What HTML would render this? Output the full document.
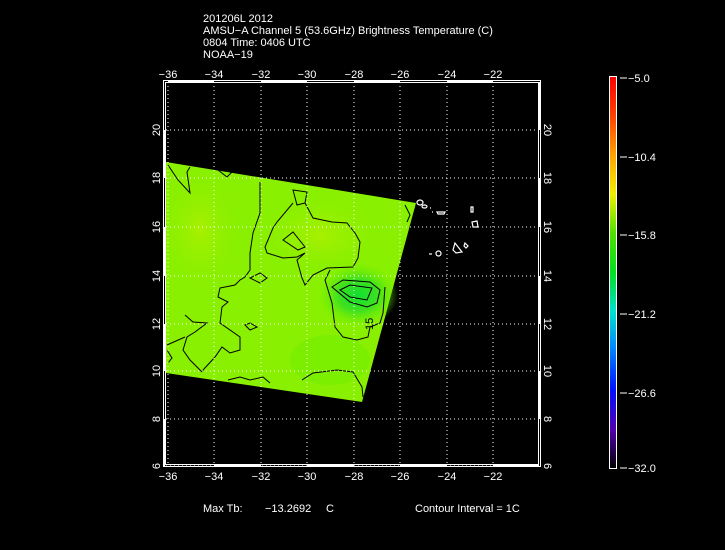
<!DOCTYPE html>
<html><head><meta charset="utf-8"><style>
html,body{margin:0;padding:0;background:#000;width:725px;height:550px;overflow:hidden}
svg text{font-family:"Liberation Sans",sans-serif;fill:#fff}
</style></head><body>
<svg width="725" height="550" viewBox="0 0 725 550" xmlns="http://www.w3.org/2000/svg">
<defs>
<linearGradient id="cb" x1="0" y1="0" x2="0" y2="1">
<stop offset="0" stop-color="#ff0000"/>
<stop offset="0.1" stop-color="#ff4000"/>
<stop offset="0.2" stop-color="#ffa000"/>
<stop offset="0.3" stop-color="#f0f000"/>
<stop offset="0.4" stop-color="#50e000"/>
<stop offset="0.5" stop-color="#00e020"/>
<stop offset="0.6" stop-color="#00e0d0"/>
<stop offset="0.7" stop-color="#0080ff"/>
<stop offset="0.8" stop-color="#0010ff"/>
<stop offset="0.9" stop-color="#5000b0"/>
<stop offset="1" stop-color="#000000"/>
</linearGradient>
<radialGradient id="blob" cx="0.5" cy="0.5" r="0.5">
<stop offset="0" stop-color="#10e030"/>
<stop offset="0.5" stop-color="#40e020"/>
<stop offset="1" stop-color="#70f000" stop-opacity="0"/>
</radialGradient>
<radialGradient id="yl" cx="0.5" cy="0.5" r="0.5">
<stop offset="0" stop-color="#a8f000"/>
<stop offset="1" stop-color="#90f000" stop-opacity="0"/>
</radialGradient>
</defs>
<g font-size="11">
<text x="203" y="22">201206L 2012</text>
<text x="203" y="34">AMSU−A Channel 5 (53.6GHz) Brightness Temperature (C)</text>
<text x="203" y="46">0804 Time: 0406 UTC</text>
<text x="203" y="58">NOAA−19</text>
</g>
<polygon points="166,162 416,203 362,402 166,373" fill="#88f000"/>
<ellipse cx="320" cy="235" rx="60" ry="40" fill="url(#yl)"/>
<ellipse cx="200" cy="230" rx="40" ry="60" fill="url(#yl)"/>
<ellipse cx="358" cy="295" rx="40" ry="32" fill="url(#blob)"/>
<ellipse cx="330" cy="360" rx="40" ry="25" fill="#70ee00" opacity="0.5"/>
<g fill="none" stroke="#000" stroke-width="1">
<path d="M168,165 L178,180 L190,193 L187,172 L190,167"/>
<path d="M218,170 L227,177 L232,172"/>
<path d="M260,182 L260,213 L253,233 L250,253 L250,270 L245,277 L240,280 L235,285 L220,288 L218,297 L228,302 L222,307 L220,323 L240,337 L240,350 L230,353 L222,347 L215,357 L203,370 L202,372"/>
<path d="M185,315 L193,322 L207,323 L195,332 L187,337 L183,350 L190,360 L202,372"/>
<path d="M167,345 L185,337"/>
<path d="M167,350 L172,358 L168,363"/>
<path d="M293,190 L307,192 L305,203 L297,205 Z"/>
<path d="M305,203 L313,218 L332,222 L347,223 L355,233 L360,242 L358,258 L353,267 L327,268 L313,275 L305,285 L302,278 L297,260 L305,253 L297,257 L283,258 L267,253 L265,247 L273,228 L277,222 L293,203"/>
<path d="M283,240 L293,232 L305,247 L298,250 Z"/>
<path d="M250,278 L260,273 L267,278 L260,283 Z"/>
<path d="M245,325 L250,323 L257,327 L250,330 Z"/>
<path d="M385,287 L383,313 L380,323 L370,327 L368,337 L357,340 L343,337 L335,327 L332,303 L325,280 L330,270"/>
<path d="M332,287 L343,280 L370,282 L380,290 L377,303 L367,307 L350,302 Z"/>
<path d="M340,290 L350,285 L372,288 L367,300 L350,297 Z"/>
<path d="M228,380 L240,377 L250,380 L263,377 L270,383"/>
<path d="M302,380 L313,373 L337,370 L353,372 L362,387 L363,397"/>
<path d="M405,205 L410,215 L407,222"/>
</g>
<text font-size="11" style="fill:#000" transform="translate(373,330) rotate(-90)">15</text>
<g fill="none" stroke="#fff" stroke-width="1.2">
<ellipse cx="420" cy="202.5" rx="3" ry="2.5"/>
<ellipse cx="424.5" cy="206.5" rx="2.5" ry="1.5"/>
<path d="M430,208h1 M432,212h1"/>
<path d="M437,212 L445,212 L444,214 L438,214 Z"/>
<path d="M471,207 L473,207 L473,212 L471,212 Z"/>
<path d="M472,222 L477,221 L478,227 L473,227 Z"/>
<path d="M455,243 L453,250 L456,253 L462,252 Z"/>
<path d="M465,243 L468,246 L466,248 L464,246 Z"/>
<path d="M429,254h3"/>
<ellipse cx="438.5" cy="253.5" rx="2.5" ry="2.5"/>
</g>
<g stroke="#fff" stroke-width="1" stroke-dasharray="1,3">
<path d="M168,82V466 M214,82V466 M261,82V466 M307,82V466 M354,82V466 M400,82V466 M447,82V466 M493,82V466"/>
<path d="M166,130H538 M166,178H538 M166,227H538 M166,276H538 M166,324H538 M166,371H538 M166,419H538 M166,465H538"/>
</g>
<rect x="163.5" y="80.5" width="377" height="386" fill="none" stroke="#fff"/>
<rect x="165.5" y="82.5" width="373" height="382" fill="none" stroke="#fff"/>
<g stroke="#fff" stroke-width="2">
<path d="M168,81H214 M261,81H307 M354,81H400 M447,81H493"/>
<path d="M214,466H261 M307,466H354 M400,466H447 M493,466H539"/>
<path d="M164,130V178 M164,227V276 M164,324V371 M164,419V466"/>
<path d="M540,82V130 M540,178V227 M540,276V324 M540,371V419"/>
</g>
<g font-size="11" text-anchor="middle">
<text x="168" y="78">−36</text><text x="214" y="78">−34</text><text x="261" y="78">−32</text><text x="307" y="78">−30</text><text x="354" y="78">−28</text><text x="400" y="78">−26</text><text x="447" y="78">−24</text><text x="493" y="78">−22</text>
<text x="168" y="480">−36</text><text x="214" y="480">−34</text><text x="261" y="480">−32</text><text x="307" y="480">−30</text><text x="354" y="480">−28</text><text x="400" y="480">−26</text><text x="447" y="480">−24</text><text x="493" y="480">−22</text>
</g>
<g font-size="11" text-anchor="middle">
<text transform="translate(160,130) rotate(-90)">20</text>
<text transform="translate(160,178) rotate(-90)">18</text>
<text transform="translate(160,227) rotate(-90)">16</text>
<text transform="translate(160,276) rotate(-90)">14</text>
<text transform="translate(160,324) rotate(-90)">12</text>
<text transform="translate(160,371) rotate(-90)">10</text>
<text transform="translate(160,419) rotate(-90)">8</text>
<text transform="translate(160,466) rotate(-90)">6</text>
<text transform="translate(544,130) rotate(90)">20</text>
<text transform="translate(544,178) rotate(90)">18</text>
<text transform="translate(544,227) rotate(90)">16</text>
<text transform="translate(544,276) rotate(90)">14</text>
<text transform="translate(544,324) rotate(90)">12</text>
<text transform="translate(544,371) rotate(90)">10</text>
<text transform="translate(544,419) rotate(90)">8</text>
<text transform="translate(544,466) rotate(90)">6</text>
</g>
<rect x="609.5" y="76.5" width="7" height="392" fill="url(#cb)" stroke="#fff"/>
<g stroke="#fff"><path d="M620,78H627 M620,157H627 M620,235H627 M620,314H627 M620,393H627 M620,468H627"/></g>
<g font-size="11">
<text x="628" y="82">−5.0</text>
<text x="628" y="161">−10.4</text>
<text x="628" y="239">−15.8</text>
<text x="628" y="318">−21.2</text>
<text x="628" y="397">−26.6</text>
<text x="628" y="472">−32.0</text>
</g>
<g font-size="11">
<text x="203" y="512">Max Tb:</text>
<text x="265" y="512">−13.2692</text>
<text x="326" y="512">C</text>
<text x="415" y="512">Contour Interval = 1C</text>
</g>
</svg>
</body></html>
